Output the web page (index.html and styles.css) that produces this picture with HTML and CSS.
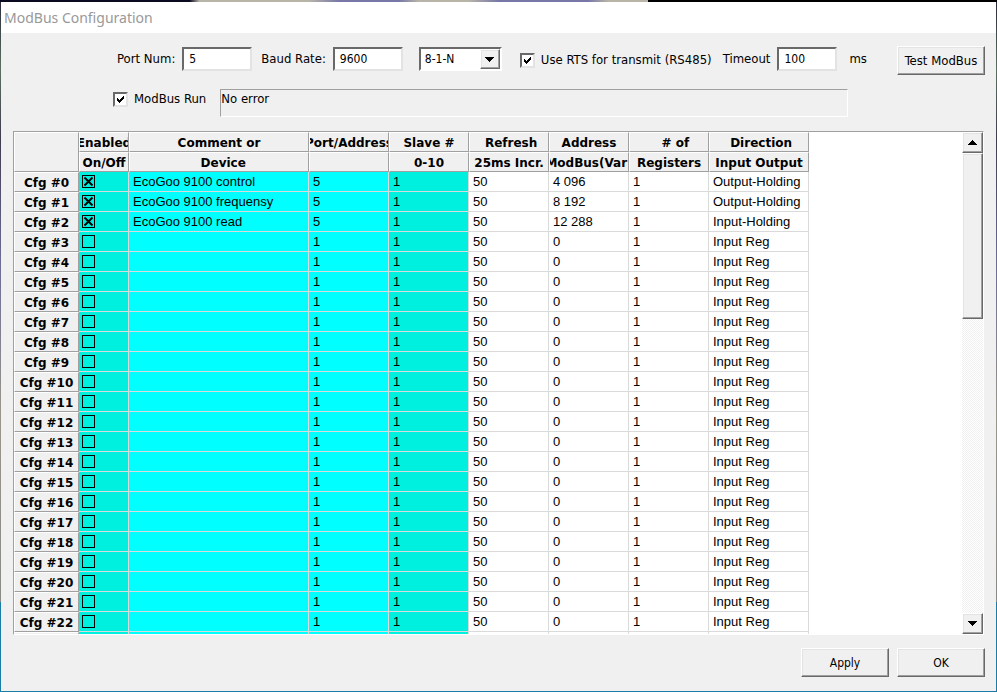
FILE: index.html
```html
<!DOCTYPE html>
<html lang="en">
<head>
<meta charset="utf-8">
<title>ModBus Configuration</title>
<link rel="stylesheet" href="styles.css">
</head>
<body>
<main class="window">
  <h1 class="titlebar">ModBus Configuration</h1>
  <form class="content">
    <div class="toolbar">
      <div class="field"><label for="port">Port Num:</label><input class="text text-medium" id="port" type="text" value="5"></div>
      <div class="field"><label for="baud">Baud Rate:</label><input class="text text-medium" id="baud" type="text" value="9600"></div>
      <div class="combo">
        <select id="framing" aria-label="Framing"><option>8-1-N</option></select>
        <span class="combo-arrow"><svg width="9" height="5" viewBox="0 0 9 5" shape-rendering="crispEdges"><path d="M0 0h9v1h-1v1h-1v1h-1v1h-1v1h-1v-1h-1v-1h-1v-1h-1v-1h-1z"/></svg></span>
      </div>
      <label class="check rts"><input type="checkbox" checked>Use RTS for transmit (RS485)</label>
      <div class="field field-timeout"><label for="timeout">Timeout</label><input class="text text-small" id="timeout" type="text" value="100"><span class="unit">ms</span></div>
      <button class="button test" type="button">Test ModBus</button>
    </div>
    <div class="status-row">
      <label class="check"><input type="checkbox" checked>ModBus Run</label>
      <output class="status">No error</output>
    </div>
    <div class="grid">
      <div class="grid-pane">
        <table class="config">
          <colgroup><col class="c-name"><col class="c-enabled"><col class="c-comment"><col class="c-std"><col class="c-std"><col class="c-std"><col class="c-std"><col class="c-std"><col class="c-direction"></colgroup>
          <thead>
            <tr><th rowspan="2"></th><th><span>Enabled</span></th><th><span>Comment or</span></th><th><span>Port/Address</span></th><th><span>Slave #</span></th><th><span> Refresh</span></th><th><span>Address</span></th><th><span>   # of</span></th><th><span> Direction</span></th></tr>
            <tr><th><span>On/Off</span></th><th><span>  Device</span></th><th></th><th><span>0-10</span></th><th><span>25ms Incr.</span></th><th><span>ModBus(Var)</span></th><th><span>Registers</span></th><th><span>Input Output</span></th></tr>
          </thead>
          <tbody id="rows"></tbody>
        </table>
      </div>
      <div class="scrollbar">
        <button class="scroll-button" type="button" aria-label="Scroll up"><svg width="9" height="5" viewBox="0 0 9 5" shape-rendering="crispEdges"><path d="M4 0h1v1h1v1h1v1h1v1h1v1h-9v-1h1v-1h1v-1h1v-1h1z"/></svg></button>
        <div class="scroll-track"><div class="scroll-thumb"></div></div>
        <button class="scroll-button" type="button" aria-label="Scroll down"><svg width="9" height="5" viewBox="0 0 9 5" shape-rendering="crispEdges"><path d="M0 0h9v1h-1v1h-1v1h-1v1h-1v1h-1v-1h-1v-1h-1v-1h-1v-1h-1z"/></svg></button>
      </div>
    </div>
    <div class="actions">
      <button class="button" type="button">Apply</button>
      <button class="button" type="button">OK</button>
    </div>
  </form>
</main>
<script src="script.js"></script>
</body>
</html>
```
FILE: styles.css
```css
* { box-sizing: border-box; }

body {
  margin: 0;
  background:
    linear-gradient(90deg, #0a0a20 0 19%, #b8b4a8 20% 31%, #7878a8 34% 40%, #b8b4a8 42% 47%, #7878a8 50% 59%, #b8b4a8 61% 65%, #000 65%) 0 0 / 100% 2px no-repeat,
    linear-gradient(#2a2a3c, #5a7060 10%, #403c50 20%, #6c6c98 38%, #99968a 60%, #8a8a86 87%, #1c7ca8 87%);
  color: #000;
  font: 13px/16px "DejaVu Sans Condensed", "DejaVu Sans", sans-serif;
}

.window {
  display: flex;
  flex-direction: column;
  height: 100vh;
  padding: 2px 1px 1px;
}

.titlebar {
  flex: none;
  height: 31px;
  margin: 0;
  padding: 0 3px;
  background: #fff;
  color: #999;
  font: 14px/31px "Noto Sans", sans-serif;
}

.content {
  display: flex;
  flex-direction: column;
  flex: 1;
  min-height: 0;
  padding: 13px 11px 14px 12px;
  background: #f0f0f0;
}

.toolbar {
  display: flex;
  align-items: flex-start;
  padding-left: 104px;
}

.field {
  display: flex;
  align-items: center;
  gap: 7px;
  height: 26px;
  margin-right: 9px;
}

.field-timeout { margin-left: 11px; }
.unit { padding-left: 5px; }

.text {
  height: 24px;
  padding: 0 5px;
  border: 2px solid;
  border-color: #696969 #e3e3e3 #e3e3e3 #696969;
  outline: 0;
  background: #fff;
  color: #000;
  font: inherit;
  font-size: 12px;
}

.text-medium { width: 70px; }
.text-small { width: 60px; }

.combo {
  position: relative;
  width: 83px;
  height: 24px;
  margin: 1px 0 0 7px;
  border: 2px solid;
  border-color: #696969 #fff #fff #696969;
  background: #fff;
}

.combo select {
  display: block;
  width: 100%;
  height: 20px;
  padding: 0 4px;
  border: 0;
  outline: 0;
  appearance: none;
  background: #fff;
  color: #000;
  font: inherit;
  font-size: 12px;
}

.combo-arrow {
  position: absolute;
  top: 0;
  right: 0;
  display: grid;
  place-items: center;
  width: 20px;
  height: 20px;
  pointer-events: none;
}

.button, .scroll-button, .scroll-thumb, .combo-arrow {
  border: 1px solid;
  border-color: #fff #696969 #696969 #fff;
  background: #f0f0f0;
  box-shadow: inset -1px -1px #a0a0a0, inset 1px 1px #e3e3e3;
}

.button {
  width: 88px;
  height: 29px;
  padding: 0;
  color: #000;
  font: inherit;
  font-size: 12px;
}

.test {
  margin-left: auto;
  font-size: 13px;
}

.check {
  display: flex;
  align-items: center;
  gap: 6px;
  height: 28px;
}

.check input {
  width: 15px;
  height: 15px;
  margin: 0;
  appearance: none;
  border: 2px solid;
  border-color: #696969 #e3e3e3 #e3e3e3 #696969;
  background: #fff;
}

.check input:checked {
  background: #fff url("data:image/svg+xml,%3Csvg xmlns='http://www.w3.org/2000/svg' viewBox='0 0 11 11' shape-rendering='crispEdges'%3E%3Cpath d='M2 4h1v1h1v1h1v-1h1v-1h1v-1h1v-1h1v3h-1v1h-1v1h-1v1h-1v1h-1v-1h-1v-1h-1z'/%3E%3C/svg%3E") center / 11px 11px no-repeat;
}

.rts { margin-left: 18px; }

.status-row {
  display: flex;
  gap: 14px;
  margin-top: 14px;
  padding: 0 137px 0 100px;
}

.status-row .check { height: 20px; }

.status {
  flex: 1;
  height: 28px;
  padding: 1px 0;
  border: 1px solid;
  border-color: #a0a0a0 #fff #fff #a0a0a0;
}

.grid {
  display: flex;
  flex: 1;
  min-height: 0;
  margin: 14px 1px 0 0;
  border: 1px solid;
  border-color: #a0a0a0 #fff #fff #a0a0a0;
  background: #fff;
}

.grid-pane {
  flex: 1;
  overflow: hidden;
}

.config {
  width: 795px;
  table-layout: fixed;
  border-collapse: separate;
  border-spacing: 0;
}

.c-name { width: 65px; }
.c-enabled { width: 50px; }
.c-comment { width: 180px; }
.c-std { width: 80px; }
.c-direction { width: 100px; }

.config tr { height: 20px; }

.config th {
  height: 20px;
  padding: 0;
  overflow: hidden;
  border: 1px solid;
  border-color: #fff #a0a0a0 #a0a0a0 #fff;
  background: #f0f0f0;
  font: bold 12px/20px "DejaVu Sans", sans-serif;
}

.config th span {
  display: flex;
  justify-content: center;
  height: 18px;
  overflow: hidden;
  white-space: pre;
}

.config td {
  height: 20px;
  padding: 0 4px;
  border: 1px solid #dadada;
  border-width: 0 1px 1px 0;
  font: 13px/18px "Liberation Sans", sans-serif;
  white-space: nowrap;
}

.config td:nth-child(2), .config td:nth-child(5) { background: #00f0e0; }
.config td:nth-child(3), .config td:nth-child(4) { background: #0ff; }
.config td:nth-child(2) { padding: 0 3px; }

.config td input {
  display: block;
  width: 13px;
  height: 13px;
  margin: 0;
  appearance: none;
  border: 1px solid #000;
}

.config td input:checked {
  background: url("data:image/svg+xml,%3Csvg xmlns='http://www.w3.org/2000/svg' viewBox='0 0 11 11'%3E%3Cpath d='M1.5 1.5l8 8M9.5 1.5l-8 8' stroke='%23000' stroke-width='2'/%3E%3C/svg%3E") center / 11px 11px no-repeat;
}

.scrollbar {
  display: flex;
  flex-direction: column;
  width: 21px;
}

.scroll-button {
  display: grid;
  place-items: center;
  width: 21px;
  height: 21px;
  padding: 0;
}

.scroll-track {
  flex: 1;
  background: repeating-conic-gradient(#f0f0f0 0 25%, #fff 0 50%) 0 0 / 2px 2px;
}

.scroll-thumb { height: 36%; }

.actions {
  display: flex;
  justify-content: flex-end;
  gap: 8px;
  margin-top: 13px;
}
```
FILE: script.js
```js
const configured = [
  [true, "EcoGoo 9100 control", "5", "1", "50", "4 096", "1", "Output-Holding"],
  [true, "EcoGoo 9100 frequensy", "5", "1", "50", "8 192", "1", "Output-Holding"],
  [true, "EcoGoo 9100 read", "5", "1", "50", "12 288", "1", "Input-Holding"]
];
const unused = [false, "", "1", "1", "50", "0", "1", "Input Reg"];
const body = document.getElementById("rows");

for (let i = 0; i < 24; i++) {
  const [enabled, ...values] = configured[i] || unused;
  const row = body.insertRow();
  const name = document.createElement("th");
  const label = document.createElement("span");
  label.textContent = "Cfg #" + i;
  name.append(label);
  row.append(name);
  const box = document.createElement("input");
  box.type = "checkbox";
  box.checked = enabled;
  box.setAttribute("aria-label", "Enable Cfg #" + i);
  row.insertCell().append(box);
  for (const value of values) row.insertCell().textContent = value;
}
```
